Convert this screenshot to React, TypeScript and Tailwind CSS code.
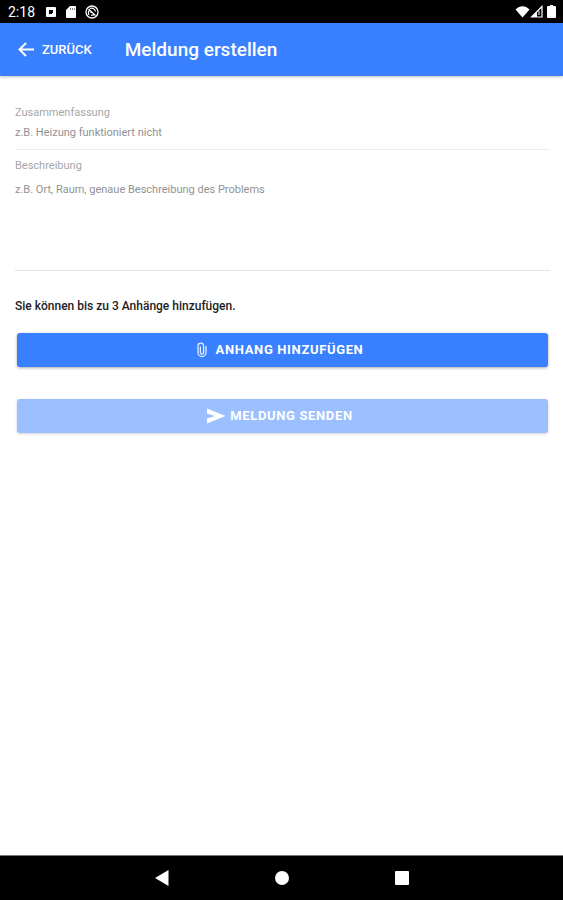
import React from "react";

function StatusBar() {
  return (
    <div className="flex h-[23px] shrink-0 items-center justify-between bg-black pl-2 pr-[7px] text-white">
      <div className="flex items-center">
        <span className="w-[37px] text-sm leading-none">2:18</span>
        <svg width="12" height="12" viewBox="0 0 12 12" className="mr-2" aria-hidden="true">
          <rect x="1" y="1" width="10" height="10" rx="1" fill="#fff" />
          <path fill="#000" d="M4 4h4v3H7v1H4Z" />
        </svg>
        <svg width="12" height="12" viewBox="0 0 12 12" className="mr-2" aria-hidden="true">
          <path fill="#fff" d="M5 0h5a1 1 0 0 1 1 1v10a1 1 0 0 1-1 1H2a1 1 0 0 1-1-1V4Z" />
          <path stroke="#888" strokeWidth="1" d="M5.500 2v2M7.500 2v2M9.500 2v2" />
        </svg>
        <svg width="14" height="14" viewBox="0 0 14 14" fill="none" stroke="#fff" aria-hidden="true">
          <circle cx="7" cy="7" r="6" strokeWidth="1.3" />
          <path strokeWidth="1.2" d="M3.500 4l7 6.500M4 10C2.500 7 4 5 5.500 5.500M5 3.500c3-1 5 .5 5.500 3M6 10c1.500.5 3 0 4-1M6 8V6" />
        </svg>
      </div>
      <div className="flex items-center">
        <svg width="15" height="14" viewBox="0 0 15 14" aria-hidden="true">
          <path fill="#fff" d="M7.500 12.500.5 4.500C4.500 0 10.500 0 14.500 4.500Z" />
        </svg>
        <svg width="13" height="13" viewBox="0 0 13 13" className="mr-1" aria-hidden="true">
          <path fill="none" stroke="#fff" strokeWidth="1.200" d="M12 1.500V12H1.500Z" />
          <path fill="#fff" d="M7 6.500V12H1.500Z" />
          <path stroke="#fff" strokeWidth="1" d="M9 6v4" />
        </svg>
        <svg width="9" height="14" viewBox="0 0 9 14" aria-hidden="true">
          <path fill="#fff" d="M3 0h3v1h2a1 1 0 0 1 1 1v10a1 1 0 0 1-1 1H1a1 1 0 0 1-1-1V2a1 1 0 0 1 1-1h2Z" />
        </svg>
      </div>
    </div>
  );
}

function Header() {
  return (
    <header className="z-10 flex h-[53px] shrink-0 items-center bg-[#3880ff] pl-[18px] text-white shadow-[0_1px_3px_rgba(0,0,0,0.25)]">
      <button type="button" className="mr-[33px] flex items-center gap-2 text-[13px] font-medium leading-none">
        <svg width="16" height="16" viewBox="0 0 16 16" fill="none" stroke="#fff" strokeWidth="2" aria-hidden="true">
          <path d="M16 7.500H1.500M8 1 1.500 7.500 8 14" />
        </svg>
        ZURÜCK
      </button>
      <h1 className="text-[19px] font-medium leading-6">Meldung erstellen</h1>
    </header>
  );
}

function NavBar() {
  return (
    <nav className="grid h-[45px] shrink-0 grid-cols-[1fr_240px_1fr] items-center border-t border-[#777] bg-black">
      <button type="button" aria-label="Zurück" className="-mr-2 justify-self-end">
        <svg width="16" height="16" viewBox="0 0 16 16" aria-hidden="true">
          <path fill="#fff" d="M14.500 0v16L1 8Z" />
        </svg>
      </button>
      <button type="button" aria-label="Startseite" className="justify-self-center">
        <svg width="16" height="16" viewBox="0 0 16 16" aria-hidden="true">
          <circle cx="8" cy="8" r="7" fill="#fff" />
        </svg>
      </button>
      <button type="button" aria-label="Übersicht" className="-ml-2 justify-self-start">
        <svg width="16" height="16" viewBox="0 0 16 16" aria-hidden="true">
          <rect x="1" y="1" width="14" height="14" rx="1" fill="#fff" />
        </svg>
      </button>
    </nav>
  );
}

export default function App() {
  return (
    <div className="flex min-h-screen flex-col bg-white font-['Roboto',sans-serif]">
      <StatusBar />
      <Header />
      <main className="flex-1 pl-[15px] pr-[13px] pt-[29px]">
        <form>
          <div className="flex flex-col border-b border-[#ededed] pb-[6px]">
            <label htmlFor="summary" className="text-[11px] leading-4 text-[#a6a6a6]">Zusammenfassung</label>
            <input
              id="summary"
              type="text"
              placeholder="z.B. Heizung funktioniert nicht"
              className="h-[22px] text-[11px] text-[#222] outline-none placeholder:text-[#929292]"
            />
          </div>
          <div className="flex flex-col border-b border-[#e2e2e2] pt-2">
            <label htmlFor="description" className="text-[11px] leading-4 text-[#a6a6a6]">Beschreibung</label>
            <textarea
              id="description"
              placeholder="z.B. Ort, Raum, genaue Beschreibung des Problems"
              className="h-24 resize-none pt-2 text-[11px] leading-4 text-[#222] outline-none placeholder:text-[#929292]"
            />
          </div>
          <p className="mt-[27px] text-xs font-medium text-[#222]">Sie können bis zu 3 Anhänge hinzufügen.</p>
          <div className="mx-[2px] mt-[19px] flex flex-col gap-8">
            <button
              type="button"
              className="flex h-[34px] items-center justify-center gap-2 rounded-[3px] bg-[#3880ff] pr-[6px] text-[13px] font-bold tracking-wider text-white shadow-[0_1px_3px_rgba(0,0,0,0.35)]"
            >
              <svg width="12" height="16" viewBox="0 0 12 16" fill="none" stroke="#e3edff" strokeWidth="1.300" strokeLinecap="round" aria-hidden="true">
                <path d="M10 4.500v6a4 4 0 0 1-8 0V4a2.800 2.800 0 0 1 5.600 0v6.500a1.600 1.600 0 0 1-3.200 0V4.800" />
              </svg>
              ANHANG HINZUFÜGEN
            </button>
            <button
              type="submit"
              disabled
              className="flex h-[34px] items-center justify-center gap-1 rounded-[3px] bg-[#9cbfff] pr-[6px] text-[13px] font-bold tracking-wider text-white shadow-[0_1px_3px_rgba(0,0,0,0.18)]"
            >
              <svg width="20" height="16" viewBox="0 0 20 16" aria-hidden="true">
                <path fill="#fff" d="M1 0.500 19.500 8 1 15.500V10.500l8-2.500L1 5.500Z" />
              </svg>
              MELDUNG SENDEN
            </button>
          </div>
        </form>
      </main>
      <NavBar />
    </div>
  );
}
